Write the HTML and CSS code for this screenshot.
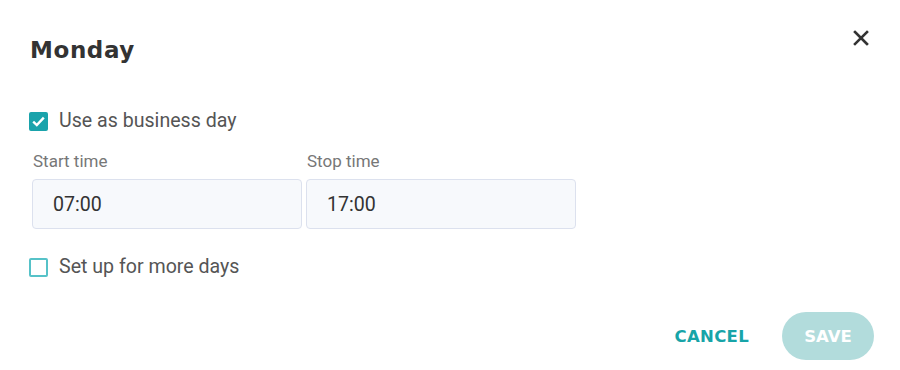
FILE: index.html
```html
<!DOCTYPE html>
<html lang="en">
<head>
  <meta charset="UTF-8" />
  <title>Monday</title>
  <link rel="stylesheet" href="styles.css">
</head>
<body>
  <div class="dialog">
    <div class="dialog-head">
      <h2 class="dialog-title">Monday</h2>
      <button class="close-btn" aria-label="Close">
        <svg width="16" height="16" viewBox="0 0 16 16">
          <path d="M2 2 L14 14 M14 2 L2 14" stroke="#333" stroke-width="2.6" stroke-linecap="square" />
        </svg>
      </button>
    </div>

    <label class="check-row">
      <span class="box checked">
        <svg width="15" height="15" viewBox="0 0 15 15">
          <path d="M2.2 7.6 L5.8 11 L12.8 3.6" fill="none" stroke="#fff" stroke-width="2.4" />
        </svg>
      </span>
      Use as business day
    </label>

    <div class="times">
      <div class="field">
        <div class="field-label">Start time</div>
        <div class="time-input">07:00</div>
      </div>
      <div class="field">
        <div class="field-label">Stop time</div>
        <div class="time-input">17:00</div>
      </div>
    </div>

    <label class="check-row more-days">
      <span class="box"></span>
      Set up for more days
    </label>

    <div class="actions">
      <button class="btn-text">CANCEL</button>
      <button class="btn-save">SAVE</button>
    </div>
  </div>
</body>
</html>
```

FILE: styles.css
```css
body {
  margin: 0;
  background: #fff;
  font-family: Roboto, "Liberation Sans", sans-serif;
  color: #555;
}

.dialog {
  width: 900px;
  height: 370px;
  box-sizing: border-box;
  padding: 28px 26px 0 29px;
}

.dialog-head {
  display: flex;
  justify-content: space-between;
  align-items: flex-start;
}

.dialog-title {
  margin: 9px 0 0 1px;
  font-family: "DejaVu Sans", sans-serif;
  font-weight: bold;
  font-size: 23px;
  letter-spacing: 0.6px;
  color: #333;
}

.close-btn {
  border: none;
  background: none;
  padding: 0;
  margin-top: 2px;
  margin-right: 5px;
  cursor: pointer;
}

.check-row {
  display: flex;
  align-items: center;
  gap: 11px;
  font-size: 19.6px;
  line-height: 24px;
  color: #555;
  cursor: pointer;
}

.dialog-head + .check-row {
  margin-top: 46px;
}

.box {
  width: 19px;
  height: 19px;
  box-sizing: border-box;
  border: 2px solid #56c2c8;
  border-radius: 2px;
  display: flex;
  align-items: center;
  justify-content: center;
}

.box.checked {
  background: #1aa3ab;
  border-color: #1aa3ab;
}

.times {
  display: flex;
  gap: 4px;
  margin-top: 17px;
  margin-left: 3px;
}

.field-label {
  font-size: 17px;
  line-height: 22px;
  color: #777;
  margin-left: 1px;
  margin-bottom: 7px;
}

.time-input {
  width: 270px;
  height: 50px;
  box-sizing: border-box;
  background: #f7f9fc;
  border: 1px solid #dce1ee;
  border-radius: 4px;
  padding-left: 20px;
  display: flex;
  align-items: center;
  font-size: 19.6px;
  color: #333;
}

.more-days {
  margin-top: 26px;
}

.actions {
  display: flex;
  justify-content: flex-end;
  align-items: center;
  gap: 33px;
  margin-top: 33px;
}

.btn-text {
  border: none;
  background: none;
  font-family: "DejaVu Sans", sans-serif;
  font-weight: bold;
  font-size: 16.5px;
  letter-spacing: 0.3px;
  color: #17a4a8;
  padding: 0;
  cursor: pointer;
}

.btn-save {
  width: 92px;
  height: 48px;
  border: none;
  border-radius: 24px;
  background: #b2dcdc;
  color: #fff;
  font-family: "DejaVu Sans", sans-serif;
  font-weight: bold;
  font-size: 16.5px;
  cursor: pointer;
}
```
